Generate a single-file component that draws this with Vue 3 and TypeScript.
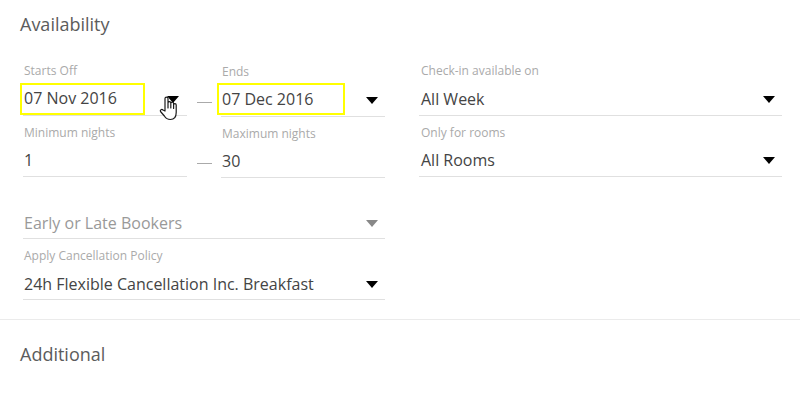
<script setup lang="ts">
interface Field {
  label?: string
  value: string
  muted?: boolean
  mark?: boolean
}

const startCol: Field[] = [
  { label: 'Starts Off', value: '07 Nov 2016', mark: true },
  { label: 'Minimum nights', value: '1' },
]
const endCol: Field[] = [
  { label: 'Ends', value: '07 Dec 2016', mark: true },
  { label: 'Maximum nights', value: '30' },
]
const rightCol: Field[] = [
  { label: 'Check-in available on', value: 'All Week' },
  { label: 'Only for rooms', value: 'All Rooms' },
]
const wide: Field[] = [
  { value: 'Early or Late Bookers', muted: true },
  { label: 'Apply Cancellation Policy', value: '24h Flexible Cancellation Inc. Breakfast' },
]
</script>

<template>
  <main class="page">
    <section class="section">
      <h2 class="title">Availability</h2>
      <div class="form">
        <div class="left">
          <div class="dates">
            <div class="col">
              <div v-for="f in startCol" :key="f.value" class="field">
                <label class="label">{{ f.label }}</label>
                <div class="control">
                  <span class="value" :class="{ marked: f.mark }">{{ f.value }}</span>
                  <i v-if="f.mark" class="caret"></i>
                </div>
              </div>
              <svg class="hand" width="20" height="26" viewBox="0 0 20 26">
                <path
                  d="M6 15V2.600a1.500 1.500 0 0 1 3 0V12V7a1.400 1.400 0 0 1 2.800 0v5V7.500a1.400 1.400 0 0 1 2.800 0V12.500V9a1.300 1.300 0 0 1 2.600 0v7.500c0 4.200-2 7-5.800 7c-3 0-4.500-1-6-3.500L1.500 15.500c-.8-1.500 1.200-2.800 2.500-1.500z"
                  fill="#fff"
                  stroke="#1a1a1a"
                  stroke-width="1.200"
                  stroke-linejoin="round"
                />
              </svg>
            </div>
            <div class="dash-col"><span class="dash"></span><span class="dash"></span></div>
            <div class="col shifted">
              <div v-for="f in endCol" :key="f.value" class="field">
                <label class="label">{{ f.label }}</label>
                <div class="control">
                  <span class="value" :class="{ marked: f.mark }">{{ f.value }}</span>
                  <i v-if="f.mark" class="caret"></i>
                </div>
              </div>
            </div>
          </div>
          <div class="extras">
            <div v-for="f in wide" :key="f.value" class="field">
              <label v-if="f.label" class="label">{{ f.label }}</label>
              <div class="control">
                <span class="value" :class="{ muted: f.muted }">{{ f.value }}</span>
                <i class="caret" :class="{ faded: f.muted }"></i>
              </div>
            </div>
          </div>
        </div>
        <div class="right">
          <div v-for="f in rightCol" :key="f.value" class="field">
            <label class="label">{{ f.label }}</label>
            <div class="control">
              <span class="value">{{ f.value }}</span>
              <i class="caret"></i>
            </div>
          </div>
        </div>
      </div>
    </section>
    <section class="section additional">
      <h2 class="title">Additional</h2>
    </section>
  </main>
</template>

<style scoped>
.page {
  width: 800px;
  height: 400px;
  overflow: hidden;
  background: #fff;
  font-family: 'Open Sans', 'Noto Sans', sans-serif;
}

.section {
  padding: 12px 18px 0 20px;
}

.title {
  margin: 0;
  font-size: 18px;
  line-height: 24px;
  font-weight: 400;
  color: #5c5c5c;
}

.form {
  display: flex;
  gap: 34px;
  margin: 19px 0 0 3px;
  padding-bottom: 19px;
}

.left {
  width: 362px;
  flex: none;
}

.right {
  flex: 1;
}

.dates {
  display: flex;
}

.col {
  position: relative;
  flex: 1;
}

.shifted {
  margin-top: 1px;
}

.dash-col {
  width: 34px;
  flex: none;
  box-sizing: border-box;
  padding: 47px 9px 0 10px;
}

.dash {
  display: block;
  height: 1px;
  margin-bottom: 60px;
  background: #aaa;
}

.dash:last-child {
  margin-bottom: 0;
}

.field {
  height: 61px;
  border-bottom: 1px solid #e0e0e0;
  box-sizing: border-box;
  padding-top: 8px;
}

.field + .field {
  padding-top: 9px;
}

.label {
  display: block;
  font-size: 12px;
  line-height: 15px;
  margin-left: 1px;
  color: #aaa;
}

.control {
  display: flex;
  align-items: center;
  justify-content: space-between;
  box-sizing: border-box;
  height: 36px;
  padding: 6px 7px 0 0;
}

.field + .field .control {
  height: 34px;
}

.extras .field + .field .control {
  height: 36px;
}

.value {
  font-size: 16px;
  margin-left: 1px;
  color: #444;
}

.right .label,
.right .value {
  margin-left: 2px;
}

.value.muted {
  color: #999;
}

/* yellow highlight sits over the date value */
.value.marked {
  position: relative;
  margin-bottom: 2px;
}

.value.marked::after {
  content: '';
  position: absolute;
  left: -4px;
  top: -4px;
  width: 125px;
  height: 32px;
  border: 2px solid #ffff00;
  box-sizing: border-box;
}

.shifted .value.marked::after {
  left: -5px;
  top: -5px;
  width: 128px;
}

.caret {
  width: 0;
  height: 0;
  border-style: solid;
  border-width: 7px 6px 0;
  border-color: #000 transparent transparent;
}

.col:first-child .caret {
  margin-right: 1px;
}

.caret.faded {
  border-top-color: #888;
}

.hand {
  position: absolute;
  left: 136px;
  top: 41px;
}

.extras .field:first-child {
  padding-top: 24px;
}

.additional {
  border-top: 1px solid #ebebeb;
  padding-top: 22px;
}
</style>
